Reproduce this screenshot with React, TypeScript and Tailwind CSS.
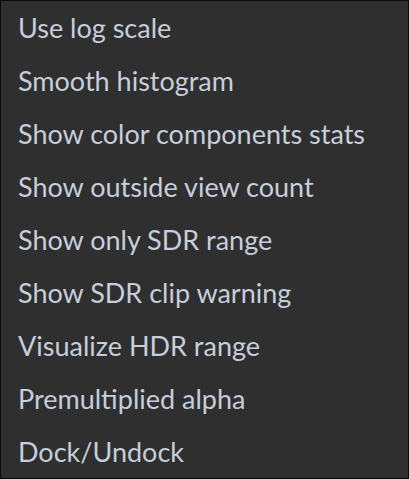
export default function App() {
  const items = [
    "Use log scale",
    "Smooth histogram",
    "Show color components stats",
    "Show outside view count",
    "Show only SDR range",
    "Show SDR clip warning",
    "Visualize HDR range",
    "Premultiplied alpha",
    "Dock/Undock",
  ];
  return (
    <div className="w-[409px] h-[479px] bg-[#2f2f2f] border border-[#0a0a0a] flex flex-col">
      {items.map((t) => (
        <div
          key={t}
          className="h-[53px] flex items-center pl-[17px] text-[27px] leading-none text-[#c6cedb] whitespace-nowrap"
          style={{ fontFamily: 'Lato, sans-serif' }}
        >
          {t}
        </div>
      ))}
    </div>
  );
}
